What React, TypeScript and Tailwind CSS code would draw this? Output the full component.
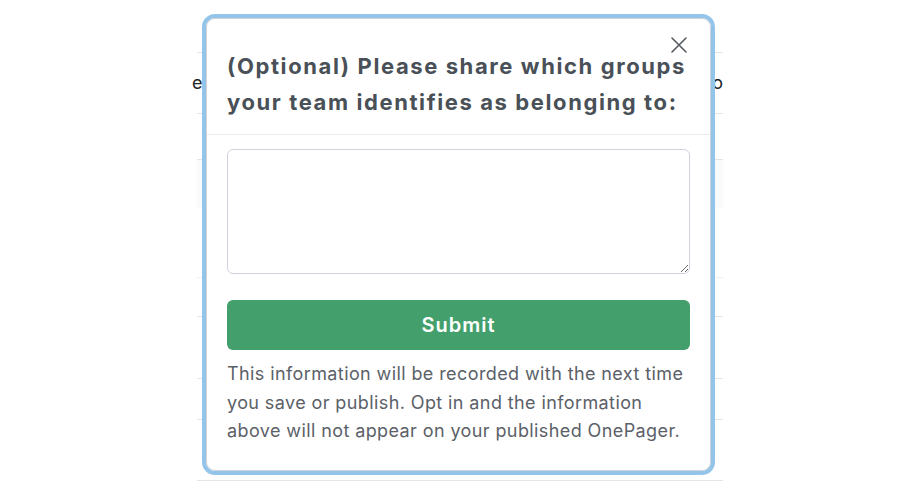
import React from "react";

export default function App() {
  const font = { fontFamily: 'Inter, "Liberation Sans", Arial, sans-serif' };
  return (
    <div className="relative w-[922px] h-[494px] bg-white overflow-hidden" style={font}>
      {/* background table */}
      <div className="ml-[197px] w-[526px] pt-[52px] text-[18px] text-[#212529]">
        <div className="h-[61px] border-t border-[#e3e5e8] flex items-center justify-between">
          <span className="-ml-[5px] leading-none">e</span>
          <span className="leading-none">o</span>
        </div>
        <div className="h-[46px] border-t border-[#e3e5e8]" />
        <div className="h-[49px] border-t border-[#e3e5e8] bg-[#f9fafb]" />
        <div className="h-[69px]" />
        <div className="h-[39px] border-t border-[#f0f1f3]" />
        <div className="h-[62px] border-t border-[#e3e5e8]" />
        <div className="h-[41px] border-t border-[#e3e5e8]" />
        <div className="h-[61px] border-t border-[#e3e5e8]" />
        <div className="h-[14px] border-t border-[#e3e5e8]" />
      </div>

      {/* modal */}
      <div className="absolute left-[202px] top-[14px] w-[513px] h-[461px] rounded-[13px] border-[4px] border-[#93c5eb]">
        <div className="relative h-full w-full rounded-[9px] border border-[#cfd3d8] bg-white">
          <button className="absolute right-[22px] top-[17px] w-[18px] h-[18px] flex items-center justify-center text-[#555a60]">
            <svg width="18" height="18" viewBox="0 0 18 18" fill="none" stroke="currentColor" strokeWidth="1.6" strokeLinecap="round">
              <path d="M2 2 L16 16 M16 2 L2 16" />
            </svg>
          </button>
          <div className="pt-[29px] pb-[14px] px-[20px] border-b border-[#e9ecef]">
            <h2 className="text-[22px] leading-[36px] font-bold tracking-[1.6px] text-[#495057]">
              (Optional) Please share which groups your team identifies as belonging to:
            </h2>
          </div>
          <div className="px-[20px] pt-[14px]">
            <textarea className="block w-full h-[125px] rounded-[6px] border border-[#cfd4dc] bg-white resize-y outline-none" />
            <button className="mt-[26px] w-full h-[50px] rounded-[6px] bg-[#43a06c] text-white text-[20px] font-semibold tracking-[1px]">
              Submit
            </button>
            <p className="mt-[10px] text-[18px] leading-[28.5px] tracking-[0.4px] text-[#5b6168]">
              This information will be recorded with the next time you save or publish. Opt in and the information above will not appear on your published OnePager.
            </p>
          </div>
        </div>
      </div>
    </div>
  );
}
